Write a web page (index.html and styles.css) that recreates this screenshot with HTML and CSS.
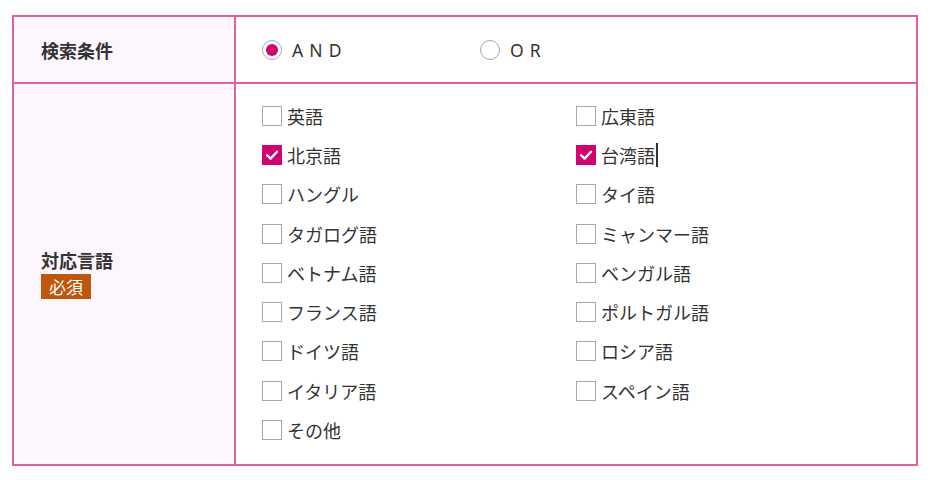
FILE: index.html
```html
<!DOCTYPE html>
<html lang="ja">
<head>
<meta charset="utf-8">
<link rel="stylesheet" href="styles.css">
</head>
<body>
<table class="search">
  <tr class="row-cond">
    <th class="head">検索条件</th>
    <td class="body">
      <div class="radios">
        <label class="radio"><span class="rbox on"></span><span class="rtext">AND</span></label>
        <label class="radio"><span class="rbox"></span><span class="rtext">OR</span></label>
      </div>
    </td>
  </tr>
  <tr class="row-lang">
    <th class="head">
      <div class="head-title">対応言語</div>
      <span class="req">必須</span>
    </th>
    <td class="body">
      <div class="checks">
        <label class="check"><span class="cbox"></span><span class="ctext">英語</span></label>
        <label class="check"><span class="cbox"></span><span class="ctext">広東語</span></label>
        <label class="check"><span class="cbox on"><svg viewBox="0 0 20 20" width="20" height="20"><path d="M5 10.2 L8.6 13.6 L15 6.8" fill="none" stroke="#fff" stroke-width="2.4" stroke-linecap="round" stroke-linejoin="round"/></svg></span><span class="ctext">北京語</span></label>
        <label class="check"><span class="cbox on"><svg viewBox="0 0 20 20" width="20" height="20"><path d="M5 10.2 L8.6 13.6 L15 6.8" fill="none" stroke="#fff" stroke-width="2.4" stroke-linecap="round" stroke-linejoin="round"/></svg></span><span class="ctext">台湾語</span><span class="caret"></span></label>
        <label class="check"><span class="cbox"></span><span class="ctext">ハングル</span></label>
        <label class="check"><span class="cbox"></span><span class="ctext">タイ語</span></label>
        <label class="check"><span class="cbox"></span><span class="ctext">タガログ語</span></label>
        <label class="check"><span class="cbox"></span><span class="ctext">ミャンマー語</span></label>
        <label class="check"><span class="cbox"></span><span class="ctext">ベトナム語</span></label>
        <label class="check"><span class="cbox"></span><span class="ctext">ベンガル語</span></label>
        <label class="check"><span class="cbox"></span><span class="ctext">フランス語</span></label>
        <label class="check"><span class="cbox"></span><span class="ctext">ポルトガル語</span></label>
        <label class="check"><span class="cbox"></span><span class="ctext">ドイツ語</span></label>
        <label class="check"><span class="cbox"></span><span class="ctext">ロシア語</span></label>
        <label class="check"><span class="cbox"></span><span class="ctext">イタリア語</span></label>
        <label class="check"><span class="cbox"></span><span class="ctext">スペイン語</span></label>
        <label class="check"><span class="cbox"></span><span class="ctext">その他</span></label>
      </div>
    </td>
  </tr>
</table>
</body>
</html>
```
FILE: styles.css
```css
html, body {
  margin: 0;
  padding: 0;
  background: #fff;
}
body {
  font-family: "Noto Sans", "Noto Sans CJK JP", sans-serif;
  color: #333;
  padding: 15px 0 0 12px;
}
.search {
  border-collapse: collapse;
  width: 906px;
  table-layout: fixed;
}
.search th, .search td {
  border: 2px solid #dc62a3;
  padding: 0;
  vertical-align: middle;
}
.head {
  width: 193px;
  background: #fdf6fd;
  text-align: left;
  font-family: "Noto Sans CJK JP", sans-serif;
  font-weight: 700;
  font-size: 18px;
  padding-left: 27px !important;
  color: #333;
}
.row-cond {
  height: 67px;
}
.head-title {
  line-height: 24px;
}
.req {
  display: inline-block;
  margin-top: 2px;
  width: 50px;
  height: 25px;
  line-height: 25px;
  background: #c0570d;
  color: #fff;
  font-weight: 400;
  font-size: 17px;
  text-align: center;
}
.body {
  padding-left: 26px !important;
}
.radios {
  display: flex;
  align-items: center;
}
.radio {
  display: flex;
  align-items: center;
  width: 218px;
}
.rbox {
  width: 18px;
  height: 18px;
  border: 1.5px solid #a9a9a9;
  border-radius: 50%;
  box-sizing: content-box;
  position: relative;
  flex: none;
}
.rbox.on::after {
  content: "";
  position: absolute;
  left: 3px;
  top: 3px;
  width: 12px;
  height: 12px;
  border-radius: 50%;
  background: #d0046f;
}
.rtext {
  margin-left: 10px;
  font-size: 17.5px;
  letter-spacing: 0.35em;
  color: #333;
  line-height: 24px;
}
.row-lang td.body {
  padding-top: 12px !important;
  padding-bottom: 14px !important;
}
.checks {
  display: grid;
  grid-template-columns: 314px 314px;
  grid-auto-rows: 39.3px;
}
.check {
  display: flex;
  align-items: center;
  height: 39.3px;
}
.cbox {
  width: 20px;
  height: 20px;
  box-sizing: border-box;
  border: 1.5px solid #a8a8a8;
  background: #fff;
  flex: none;
  display: flex;
}
.cbox.on {
  border: none;
  background: #d0046f;
}
.ctext {
  margin-left: 5px;
  font-family: "Noto Sans CJK JP", sans-serif;
  font-size: 18px;
  color: #333;
  line-height: 24px;
}
.caret {
  display: inline-block;
  width: 1.5px;
  height: 24px;
  background: #333;
  margin-left: 1px;
}
```
